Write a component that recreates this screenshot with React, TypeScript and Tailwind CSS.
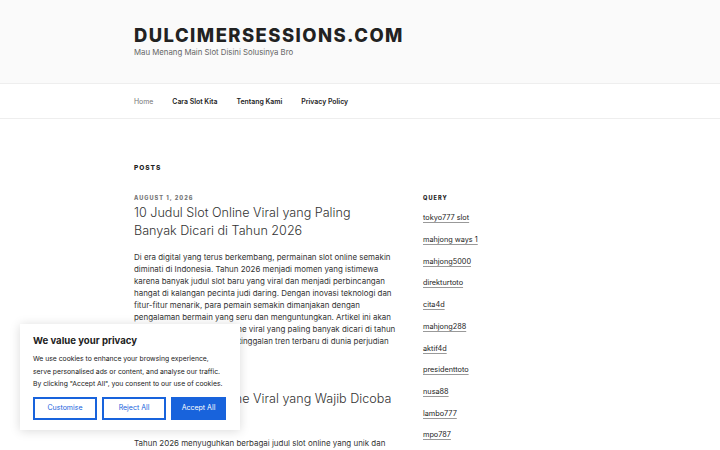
import React from 'react';

const font = { fontFamily: '"Inter", "Liberation Sans", sans-serif' };

const links = [
  'tokyo777 slot',
  'mahjong ways 1',
  'mahjong5000',
  'direkturtoto',
  'cita4d',
  'mahjong288',
  'aktif4d',
  'presidenttoto',
  'nusa88',
  'lambo777',
  'mpo787',
];

const firstBody = [
  'Di era digital yang terus berkembang, permainan slot online semakin',
  'diminati di Indonesia. Tahun 2026 menjadi momen yang istimewa',
  'karena banyak judul slot baru yang viral dan menjadi perbincangan',
  'hangat di kalangan pecinta judi daring. Dengan inovasi teknologi dan',
  'fitur-fitur menarik, para pemain semakin dimanjakan dengan',
  'pengalaman bermain yang seru dan menguntungkan. Artikel ini akan',
  'membahas 10 judul slot online viral yang paling banyak dicari di tahun',
  '2026 supaya kalian tidak ketinggalan tren terbaru di dunia perjudian',
  'online.',
];

const secondBody = [
  'Tahun 2026 menyuguhkan berbagai judul slot online yang unik dan',
  'menarik untuk dimainkan oleh para pecinta judi daring.',
];

const Post: React.FC<{ date: string; title: string; lines: string[] }> = ({ date, title, lines }) => (
  <article className="mb-[20px]">
    <div className="text-[5.6px] font-extrabold tracking-[0.18em] text-[#767676] leading-[10px]">{date}</div>
    <h2 className="mt-[1px] text-[12.6px] font-light leading-[18px] text-[#333]">{title}</h2>
    <p className="mt-[11px] whitespace-nowrap text-[7.95px] leading-[12px] text-[#333]">
      {lines.map((l, i) => (
        <React.Fragment key={i}>
          {l}
          {i < lines.length - 1 && <br />}
        </React.Fragment>
      ))}
    </p>
  </article>
);

export default function App() {
  return (
    <div className="relative h-[450px] w-[720px] overflow-hidden bg-white" style={font}>
      <header className="h-[83px] bg-[#fafafa] pl-[134px] pt-[24px]">
        <h1 className="text-[18.4px] font-extrabold leading-[22px] tracking-[0.08em] text-[#222]">DULCIMERSESSIONS.COM</h1>
        <p className="mt-[1px] text-[7.8px] leading-[10px] text-[#666]">Mau Menang Main Slot Disini Solusinya Bro</p>
      </header>

      <nav className="flex h-[36px] items-center gap-[19px] border-y border-[#eee] pl-[134px] pt-[2px] text-[6.9px] font-semibold text-[#222]">
        <span className="text-[#767676] font-normal">Home</span>
        <span>Cara Slot Kita</span>
        <span>Tentang Kami</span>
        <span>Privacy Policy</span>
      </nav>

      <main className="pl-[134px] pr-[134px] pt-[44px]">
        <h2 className="text-[6.6px] font-extrabold tracking-[0.14em] text-[#222] leading-[10px]">POSTS</h2>
        <div className="mt-[20px] flex">
          <div className="w-[262px] shrink-0">
            <Post
              date="AUGUST 1, 2026"
              title="10 Judul Slot Online Viral yang Paling Banyak Dicari di Tahun 2026"
              lines={firstBody}
            />
            <Post
              date="JULY 28, 2026"
              title="10 Judul Slot Online Viral yang Wajib Dicoba di Tahun 2026"
              lines={secondBody}
            />
          </div>
          <aside className="ml-[27px] w-[163px]">
            <h3 className="text-[5.6px] font-extrabold tracking-[0.18em] text-[#222] leading-[10px]">QUERY</h3>
            <ul className="mt-[5px]">
              {links.map((l) => (
                <li key={l} className="h-[21.7px] flex items-center text-[7.3px] text-[#222]">
                  <span className="underline decoration-[#999] underline-offset-[1.5px]">{l}</span>
                </li>
              ))}
            </ul>
          </aside>
        </div>
      </main>

      <div className="absolute left-[20px] top-[324px] w-[220px] h-[106px] bg-white px-[13px] pt-[11px] shadow-[0_1px_10px_rgba(0,0,0,0.15)]">
        <div className="text-[9.6px] font-bold text-[#212121] leading-[12px]">We value your privacy</div>
        <p className="mt-[6px] text-[6.8px] leading-[12.5px] text-[#212121]">
          We use cookies to enhance your browsing experience, serve personalised ads or content, and analyse our traffic. By clicking "Accept All", you consent to our use of cookies.
        </p>
        <div className="mt-[6px] flex gap-[5px] text-[7px]">
          <button className="h-[23px] w-[64px] border-2 border-[#1863dc] text-[#1863dc]">Customise</button>
          <button className="h-[23px] w-[64px] border-2 border-[#1863dc] text-[#1863dc]">Reject All</button>
          <button className="h-[23px] w-[55px] border-2 border-[#1863dc] bg-[#1863dc] text-white">Accept All</button>
        </div>
      </div>
    </div>
  );
}
